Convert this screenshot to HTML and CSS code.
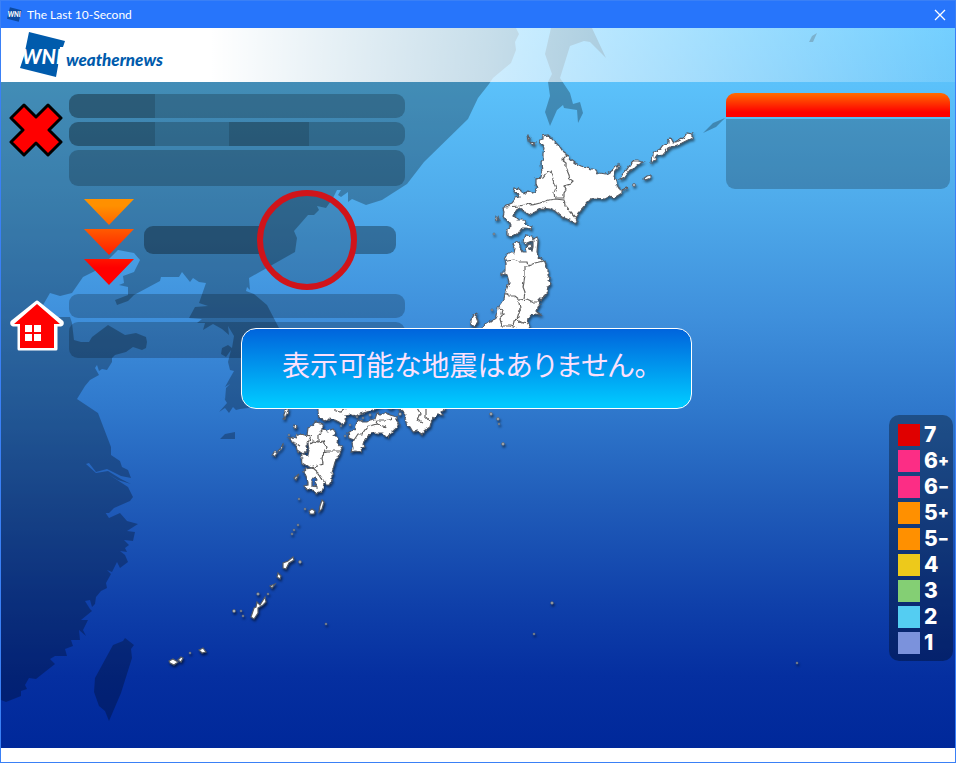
FILE: index.html
```html
<!DOCTYPE html>
<html lang="ja">
<head>
<meta charset="utf-8">
<title>The Last 10-Second</title>
<link rel="stylesheet" href="styles.css">
</head>
<body>
<div class="window">
  <div class="titlebar">
    <svg class="titlebar-icon" viewBox="0 0 46 46" aria-hidden="true">
      <path d="M9 1 45 10 43 19 36 45 0 36Z" fill="#0c4aa0"/>
      <text x="2" y="31" class="mark-text">WNI</text>
    </svg>
    <span class="titlebar-name">The Last 10-Second</span>
    <button class="close" aria-label="Close">
      <svg viewBox="0 0 12 12" aria-hidden="true"><path d="M1 1 11 11M11 1 1 11" stroke="#fff" stroke-width="1.3"/></svg>
    </button>
  </div>

  <div class="scene">
    <svg class="map" viewBox="1 28 954 720" preserveAspectRatio="xMidYMid slice" aria-hidden="true">
      <defs>
        <linearGradient id="sea" x1="0" y1="0" x2="0" y2="1">
          <stop offset="0" stop-color="#5fc8ff"/>
          <stop offset=".08" stop-color="#5bc1fa"/>
          <stop offset=".24" stop-color="#4fabeb"/>
          <stop offset=".4" stop-color="#3f90dc"/>
          <stop offset=".53" stop-color="#2f78cc"/>
          <stop offset=".66" stop-color="#205cb9"/>
          <stop offset=".8" stop-color="#0f40aa"/>
          <stop offset=".9" stop-color="#052fa0"/>
          <stop offset="1" stop-color="#00289a"/>
        </linearGradient>
        <filter id="coast" x="-5%" y="-5%" width="110%" height="110%" color-interpolation-filters="sRGB">
          <feTurbulence type="fractalNoise" baseFrequency=".22" numOctaves="2" seed="4" result="noise"/>
          <feDisplacementMap in="SourceGraphic" in2="noise" scale="4" xChannelSelector="R" yChannelSelector="G"/>
        </filter>
      </defs>
      <rect x="1" y="28" width="954" height="720" fill="url(#sea)"/>
      <g class="continent">
        <path d="M1 28H516L519 34 515 42 516 50 511 63 493 78 489 84 478 98 468 119 424 162 407 184 382 200 366 205 352 199 348 202V192L341 197 338 195 341 190H337L333 198 326 208 317 206 319 210 314 215H308L294 231 297 238 295 252 249 278 250 290 247 287 246 291 254 294 267 305 279 328 290 365 275 400 248 408 240 409 236 410 233 407 229 413 225 408 219 412 227 403 222 395 225 400 226 388 230 384 225 387 230 378 234 371 230 370 228 362 229 358 231 350 226 357 221 354 222 348 228 345 232 348 233 342 234 336 228 326 229 335 222 329 213 324 203 330 205 323H197L202 319 189 318 195 307 208 306 199 303 206 283 199 282 193 278 190 282 182 272 179 277H161L160 281 134 295 128 301 117 305 115 300 128 295V287L119 285 124 283 123 276 134 272 140 260 134 253 118 250 110 258 95 271 83 277 72 293 60 296 50 293 43 305 46 317H70L72 323 74 340 81 342H89L92 337 108 325 125 335 136 333 146 337 147 342 146 348 142 350 133 347 126 352 115 355 112 358V362L107 370 102 369 99 371 97 365 95 368 99 375 90 380 85 386 77 399 98 413 111 447V455L120 461 122 467 128 470 131 478 121 476 107 469 96 472 89 463 86 464 96 473 108 471 121 479 131 484 118 480 108 474 128 487 133 497 130 501 114 508 109 513 100 513 105 512 109 518 120 513 127 521 138 524 127 531 135 532 133 541 124 540 129 545 125 548 127 552 120 551 125 555 128 562 120 568 117 562 112 572 107 570 111 574 106 583 107 588 101 591 96 597 95 604 92 607 90 600 85 601 90 609 92 611 81 620 88 620 83 630 86 636 79 630 80 640 71 640 73 646 65 649 67 656H55L50 659 55 664 36 679 29 678 25 685 27 689 21 691V696L6 702 1 700Z"/>
        <path d="M551 28 545 54 552 74 548 82 550 96 545 112 550 126 557 110 563 105 564 108 577 110 578 123 583 113 580 102 573 104 570 93 560 78 570 46 584 41 590 42 606 58 592 28Z"/>
        <path d="M817 33 813 42 809 42 812 36ZM703 133 713 123 725 118 716 127ZM220 439 225 434 235 432V439Z"/>
        <path d="M125 638 134 645 131 649 132 658 121 693 109 721 105 711 99 706 94 692 95 678 113 645 123 641Z"/>
      </g>
      <g class="japan">
        <g filter="url(#coast)">
          <path d="M539 140 543 139 543 136 548 135 551 138 555 142 560 147 564 153 567 155 570 159 575 163 581 166 587 168 596 170 598 173 607 174 613 170 615 167 618 164 618 169 615 173 614 177 616 181 617 185 620 190 627 188 626 190 622 190 622 193 614 198 609 197 605 199 595 198 591 199 587 203 578 213 576 217 577 222 575 224 572 221 562 217 556 212 550 209 542 208 535 212 529 216 525 211 520 208 515 211 514 216 517 219 522 219 526 224 532 227 531 229 526 228 522 228 517 235 515 234 510 237 507 235 507 229 511 226 509 222 503 217 504 212 503 209 505 206 512 203 516 198 520 197 519 195 514 192 515 188 519 189 522 192 525 193 528 191 532 193 535 192 538 187 536 185 536 179 541 177 542 173 541 163 543 160 543 153 544 148Z"/>
          <path d="M523 242 525 235 532 236 533 239 537 237 538 240 537 252 539 257 542 260 545 262 546 265 548 270 548 275 550 279 549 281 551 284 548 287 547 293 542 298 539 301 540 305 538 307 537 311 541 315 535 314 531 315 529 318 528 324 530 329 530 345H470L482 328 485 324 495 320 497 316 498 308 504 300 505 294 507 288 509 282 507 275 505 274 501 275 501 272 506 272 506 270 506 262 504 257 508 253 514 253 515 248 513 243 515 242 517 243 520 242 520 248 522 252 526 252 525 248 528 245 531 244 532 248 529 248 532 251 533 247 533 241 528 243 525 245Z"/>
          <path d="M318 400V412L319 418 325 421 328 419 335 420 339 422 343 425 346 421 345 419 348 417 345 415 350 414 355 416 360 414 370 411 378 408 382 404 390 409 396 406 403 412 406 415 405 419 407 425 410 427 413 432 418 431 422 435 424 431 430 427 432 419 437 415 443 415 441 412 445 410V400Z"/>
          <path d="M348 433 355 428 358 420 362 422 367 422 370 420 375 419 377 413 381 415 386 412 390 415 397 417 397 421 400 425 392 432 390 433 388 438 386 437 382 433 373 433 368 436 367 438 363 444 364 447 361 448 362 452 355 451 352 452 353 448 352 443 354 440 349 438Z"/>
          <path d="M308 428 313 425 315 422 321 423 323 425 323 430 328 431 333 429 336 433 333 435 338 438 337 442 342 448 341 450 340 454 335 462 332 473 332 480 329 485 326 485 325 482 324 484 322 492 316 494 315 491 305 488 304 486 308 485 308 482 304 472 305 469 312 468 307 466 302 463 301 456 303 454 308 455 309 450 308 444 306 446 307 451 303 454 297 450 296 446 293 441 288 438 293 437 297 438 297 434 302 434 307 435Z"/>
          <path d="M314 478 317 480 315 483 317 487 312 486 312 481Z" fill="#2562bc"/>
          <path d="M620 180 622 175 628 168 630 165 634 161 638 161 643 162 637 165 633 169 630 170 623 179Z"/>
          <path d="M650 162 653 156 653 153 660 149 663 145 668 143 668 140 671 138 673 142 675 142 684 137 687 133 692 134 692 138 682 143 675 146 672 147 668 149 663 155 657 156 653 162Z"/>
          <path d="M643 179 647 176 651 175 651 178 645 180Z"/>
          <path d="M471 320 474 315 477 313 476 317 478 322 474 326 471 324Z"/>
          <path d="M286 409H289L287 413 285 419 283 417ZM272 456 274 452 278 452 275 456ZM278 450 283 445 283 448 279 451ZM294 425 297 426 296 429 294 428Z"/>
          <path d="M527 137 529 136 530 140 528 140ZM531 142 535 143 534 145 532 144ZM496 217 498 217 499 220 496 220Z"/>
          <g class="prefectures">
            <path d="M567 155 562 160 566 163 566 168 569 175 570 179 573 181 570 184 564 186 566 190 564 193 564 198H555L554 193 556 188 553 181 552 175 550 171 547 173 543 178 536 179"/>
            <path d="M505 207 520 206 524 205 530 203 532 205 540 203 549 200 555 199 564 200 565 205 571 212 577 219"/>
            <path d="M507 261 514 260 519 262 527 262 528 266 535 263 543 261M525 266 525 275 523 287 525 292 524 298M505 293 510 296 514 296 519 300 527 299 533 302 540 302M519 302 520 310 517 320 523 323 528 324M499 308 502 309 501 314 504 314 500 319 502 326 510 326 513 327 514 321 517 320M507 345 508 337 516 328"/>
            <path d="M335 405V411L341 412 346 408M417 408 420 413 417 420 423 423M426 408V417L429 421M392 418 386 420 377 420 376 424 367 427 362 434 358 434 354 440M376 424 386 427"/>
            <path d="M299 434 311 436 308 443M310 444 313 441 318 442 318 435 323 430M318 442 324 441 326 448 324 452 327 451 334 451 341 451M325 451 322 458 323 464 312 468 319 474 325 483M295 443 300 446"/>
          </g>
        </g>
        <path d="M322 500 324 502 322 509 319 512 320 506ZM309 511 312 509 315 511 314 514 310 514Z"/>
        <path d="M283 568 283 563 288 561 293 557 294 560 289 563 286 569ZM278 573 281 576 280 579 277 577ZM270 586 275 584 272 588Z"/>
        <path d="M251 617 254 608 256 607 257 602 260 605 265 597 266 602 263 605 258 608 258 613 254 619ZM294 478 299 474 296 480Z"/>
        <path d="M169 661 173 659 178 662 174 665 170 663ZM178 660 181 657 183 658 181 662ZM199 650 203 648 206 652 202 653Z"/>
        <g class="islets">
          <circle cx="634" cy="185" r="1.5"/><circle cx="494" cy="234" r="1"/><circle cx="492" cy="310" r="1"/>
          <circle cx="305" cy="509" r="1"/><circle cx="299" cy="499" r="1"/><circle cx="298" cy="525" r="1"/>
          <circle cx="294" cy="530" r="1"/><circle cx="292" cy="534" r="1"/><circle cx="300" cy="562" r="1.4"/>
          <circle cx="268" cy="594" r="1"/><circle cx="258" cy="594" r="1.3"/><circle cx="234" cy="611" r="1.5"/>
          <circle cx="241" cy="611" r="1"/><circle cx="243" cy="616" r="1"/><circle cx="190" cy="653" r="1"/>
          <circle cx="326" cy="624" r="1"/><circle cx="491" cy="414" r="1.4"/><circle cx="498" cy="419" r="1.4"/>
          <circle cx="499" cy="424" r="1"/><circle cx="503" cy="444" r="1.4"/><circle cx="552" cy="603" r="1.3"/>
          <circle cx="534" cy="634" r="1"/><circle cx="797" cy="663" r="1"/><circle cx="357" cy="417" r="1"/>
          <circle cx="363" cy="418" r="1"/><circle cx="370" cy="415" r="1.2"/><circle cx="350" cy="425" r="1"/>
          <circle cx="345" cy="436" r="1"/><circle cx="400" cy="414" r="1.5"/><circle cx="302" cy="458" r="1"/>
          <circle cx="289" cy="435" r="1"/><circle cx="341" cy="426" r="1"/>
        </g>
      </g>
    </svg>

    <header class="brand">
      <svg class="brand-mark" viewBox="0 0 46 46" aria-hidden="true">
        <path d="M9 0 45 9 43 15H40L38 34 36 45 0 36 4 24Z" fill="#005bac"/>
        <text x="2" y="32" class="mark-text">WNI</text>
      </svg>
      <span class="brand-name">weathernews</span>
    </header>

    <main class="stage">
      <div class="controls">
        <button class="tool" aria-label="閉じる">
          <svg width="54" height="54" viewBox="0 0 54 54" aria-hidden="true">
            <path d="M15 2 27 14 39 2 52 15 40 27 52 39 39 52 27 40 15 52 2 39 14 27 2 15Z" fill="red" stroke="#000" stroke-width="3" stroke-linejoin="round"/>
          </svg>
        </button>
        <div class="bars">
          <div class="bar"><span class="bar-label"></span></div>
          <div class="bar"><span class="bar-label"></span><span class="bar-unit"></span></div>
          <div class="bar bar-tall"></div>
        </div>
        <div class="countdown">
          <svg width="50" height="100" viewBox="0 0 50 100" aria-hidden="true">
            <defs><linearGradient id="alert" gradientUnits="userSpaceOnUse" x1="0" y1="9" x2="0" y2="95">
              <stop offset=".08" stop-color="#ff9000"/><stop offset=".8" stop-color="red"/>
            </linearGradient></defs>
            <path d="M0 9H50L25 35ZM0 39H50L25 65ZM0 69H50L25 95Z" fill="url(#alert)"/>
          </svg>
          <svg width="252" height="100" viewBox="0 0 252 100" aria-hidden="true">
            <defs><mask id="outside"><rect width="252" height="100" fill="#fff"/><circle cx="163" cy="50" r="47" fill="#000"/></mask></defs>
            <rect y="36" width="252" height="28" rx="9" fill="#000" fill-opacity=".32" mask="url(#outside)"/>
            <circle cx="163" cy="50" r="47" fill="#000" fill-opacity=".18"/>
            <circle cx="163" cy="50" r="47" fill="none" stroke="#d0141a" stroke-width="6"/>
          </svg>
        </div>
        <button class="tool tool-home" aria-label="ホーム">
          <svg width="56" height="52" viewBox="0 0 56 52" aria-hidden="true">
            <path d="M28 2 53 22Q54 24 52 25H47V49H10V25H4Q2 24 3 22Z" fill="#fff" stroke="#fff" stroke-width="3" stroke-linejoin="round"/>
            <path d="M28 4 51 24H45V48H11V24H5Z" fill="red"/>
            <path d="M16 25h7v7h-7zM25 25h7v7h-7zM16 34h7v7h-7zM25 34h7v7h-7z" fill="#fff"/>
          </svg>
        </button>
        <div class="bars">
          <div class="bar"></div>
          <div class="bar bar-tall"></div>
        </div>
      </div>

      <div class="side">
        <section class="notice">
          <div class="notice-head"></div>
          <div class="notice-body"></div>
        </section>
        <ul class="legend">
          <li><i class="swatch s7"></i><span>7</span></li>
          <li><i class="swatch s6"></i><span>6</span><b>+</b></li>
          <li><i class="swatch s6"></i><span>6</span><b>−</b></li>
          <li><i class="swatch s5"></i><span>5</span><b>+</b></li>
          <li><i class="swatch s5"></i><span>5</span><b>−</b></li>
          <li><i class="swatch s4"></i><span>4</span></li>
          <li><i class="swatch s3"></i><span>3</span></li>
          <li><i class="swatch s2"></i><span>2</span></li>
          <li><i class="swatch s1"></i><span>1</span></li>
        </ul>
      </div>
    </main>

    <div class="message" role="alert">表示可能な地震はありません。</div>
  </div>
  <div class="statusbar"></div>
</div>
</body>
</html>
```
FILE: styles.css
```css
* { box-sizing: border-box; }

body { margin: 0; }

button {
  padding: 0;
  border: 0;
  background: none;
  cursor: pointer;
}

svg { display: block; }

.window {
  display: flex;
  flex-direction: column;
  min-height: 100vh;
  border: 1px solid #3a80f6;
  background: #fff;
}

.titlebar {
  display: flex;
  align-items: center;
  height: 27px;
  padding: 0 8px 0 6px;
  background: #2775fb;
  color: #fff;
  font-family: Lato, "Noto Sans", sans-serif;
  font-size: 12px;
}

.titlebar-icon { width: 15px; height: 15px; }
.titlebar-name { flex: 1; margin-left: 5px; }
.close svg { width: 14px; height: 12px; }

.mark-text {
  fill: #fff;
  font-family: Lato, sans-serif;
  font-size: 20px;
  font-style: italic;
  font-weight: 900;
}

.scene {
  position: relative;
  display: flex;
  flex: 1;
  flex-direction: column;
}

.map {
  position: absolute;
  inset: 0;
  width: 100%;
  height: 100%;
}

.continent { fill: #000; fill-opacity: .27; }

.japan {
  fill: #fff;
  stroke: #565c66;
  stroke-width: 1.2;
  filter: drop-shadow(1px 2px 1px rgba(0, 0, 0, .5));
}

.prefectures { fill: none; stroke: #606060; }
.islets { fill: #c4ccd4; stroke-width: .8; }

.brand {
  position: relative;
  display: flex;
  align-items: center;
  height: 54px;
  padding-left: 19px;
  background: linear-gradient(90deg, #fff 22%, rgba(255, 255, 255, .7) 51%, rgba(255, 255, 255, .12));
}

.brand-mark { width: 46px; height: 46px; }

.brand-name {
  padding-top: 8px;
  color: #005bac;
  font-family: Lato, sans-serif;
  font-size: 17px;
  font-style: italic;
  font-weight: 900;
}

.stage {
  position: relative;
  display: flex;
  flex: 1;
  justify-content: space-between;
}

.controls {
  display: grid;
  grid-template-columns: 54px 336px;
  gap: 4px 6px;
  align-content: start;
  padding: 12px 0 0 8px;
}

.tool { align-self: start; margin-top: 9px; }
.tool-home { margin-top: 6px; }

.bars {
  display: flex;
  flex-direction: column;
  gap: 4px;
}

.bar {
  display: flex;
  height: 24px;
  overflow: hidden;
  border-radius: 9px;
  background: rgba(0, 0, 0, .21);
}

.bar-tall { height: 36px; }
.bar-label { width: 86px; background: rgba(0, 0, 0, .15); }
.bar-unit { width: 80px; margin-left: 74px; background: rgba(0, 0, 0, .15); }

.countdown {
  display: flex;
  grid-column: 2;
  gap: 10px;
  padding-left: 15px;
}

.side {
  display: flex;
  flex-direction: column;
  align-items: flex-end;
  justify-content: space-between;
  padding: 11px 2px 87px 0;
}

.notice {
  display: grid;
  gap: 2px;
  width: 224px;
  margin-right: 3px;
}

.notice-head {
  height: 24px;
  border-radius: 9px 9px 0 0;
  background: linear-gradient(#ff6c00, #f00 80%);
}

.notice-body {
  height: 70px;
  border-radius: 0 0 9px 9px;
  background: rgba(0, 0, 0, .22);
}

.legend {
  display: grid;
  gap: 4px;
  width: 64px;
  margin: 0;
  padding: 9px 0 7px 9px;
  border-radius: 10px;
  background: rgba(0, 0, 0, .33);
  color: #fff;
  font-family: Inter, sans-serif;
  font-size: 21px;
  font-weight: 800;
  line-height: 22px;
  list-style: none;
}

.legend li { display: flex; height: 22px; }
.legend b { font-size: 16px; font-weight: 900; line-height: 20px; }
.swatch { width: 22px; height: 22px; margin-right: 4px; }
.s7 { background: #e00000; }
.s6 { background: #fc2d85; }
.s5 { background: #ff9000; }
.s4 { background: #edc91b; }
.s3 { background: #84cf74; }
.s2 { background: #54cdf2; }
.s1 { background: #7b92dc; }

.message {
  position: absolute;
  top: 300px;
  left: 240px;
  padding: 15px 43px 23px 40px;
  border: 1px solid #fff;
  border-radius: 15px;
  background: linear-gradient(#0064dc, #00c8ff 95%);
  color: #fce0fc;
  font-family: "Noto Sans CJK JP", sans-serif;
  font-feature-settings: "palt";
  font-size: 28px;
  line-height: 41px;
  white-space: nowrap;
}

.statusbar { height: 14px; background: #fff; }
```
